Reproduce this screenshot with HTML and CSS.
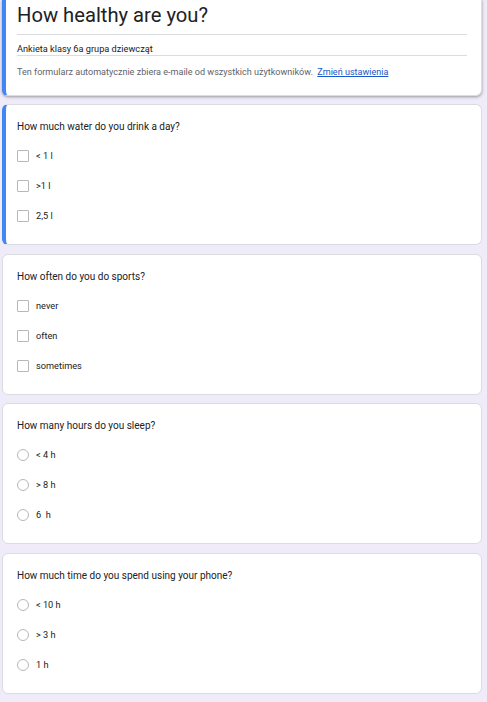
FILE: index.html
```html
<!DOCTYPE html>
<html lang="pl">
<head>
<meta charset="utf-8">
<title>How healthy are you?</title>
<link rel="stylesheet" href="styles.css">
</head>
<body>
<main class="page">
  <section class="card header active">
    <h1 class="title">How healthy are you?</h1>
    <div class="desc">Ankieta klasy 6a grupa dziewcząt</div>
    <div class="email">Ten formularz automatycznie zbiera e-maile od wszystkich użytkowników.&nbsp; <a href="#" class="link">Zmień ustawienia</a></div>
  </section>

  <section class="card active">
    <div class="question">How much water do you drink a day?</div>
    <div class="options">
      <label class="option"><span class="box"></span><span class="label">&lt; 1 l</span></label>
      <label class="option"><span class="box"></span><span class="label">&gt;1 l</span></label>
      <label class="option"><span class="box"></span><span class="label">2,5 l</span></label>
    </div>
  </section>

  <section class="card">
    <div class="question">How often do you do sports?</div>
    <div class="options">
      <label class="option"><span class="box"></span><span class="label">never</span></label>
      <label class="option"><span class="box"></span><span class="label">often</span></label>
      <label class="option"><span class="box"></span><span class="label">sometimes</span></label>
    </div>
  </section>

  <section class="card">
    <div class="question">How many hours do you sleep?</div>
    <div class="options">
      <label class="option"><span class="radio"></span><span class="label">&lt; 4 h</span></label>
      <label class="option"><span class="radio"></span><span class="label">&gt; 8 h</span></label>
      <label class="option"><span class="radio"></span><span class="label">6&nbsp; h</span></label>
    </div>
  </section>

  <section class="card">
    <div class="question">How much time do you spend using your phone?</div>
    <div class="options">
      <label class="option"><span class="radio"></span><span class="label">&lt; 10 h</span></label>
      <label class="option"><span class="radio"></span><span class="label">&gt; 3 h</span></label>
      <label class="option"><span class="radio"></span><span class="label">1 h</span></label>
    </div>
  </section>

  <section class="card">
    <div class="question">&nbsp;</div>
  </section>
</main>
</body>
</html>
```

FILE: styles.css
```css
* { box-sizing: border-box; }

html, body {
  margin: 0;
  padding: 0;
  background: #f0ebf8;
  font-family: Roboto, "Noto Sans", Arial, sans-serif;
  color: #202124;
  overflow: hidden;
}

.page {
  display: flex;
  flex-direction: column;
  padding: 0 5px 0 2px;
}

.card {
  background: #fff;
  border: 1px solid #dadce0;
  border-radius: 6px;
  padding: 15px 15px 13px 14px;
  margin-bottom: 8.5px;
  width: 480px;
}

.card.active {
  border-left: 4px solid #4285f4;
  padding-left: 11px;
}

.header {
  border-top: none;
  border-radius: 0 0 6px 6px;
  padding: 3px 14px 17px 11px;
  margin-bottom: 8px;
  box-shadow: 0 1px 2px rgba(60, 64, 67, 0.3), 0 1px 3px 1px rgba(60, 64, 67, 0.15);
}

.title {
  margin: 0;
  font-size: 20.2px;
  font-weight: 400;
  line-height: 24px;
  padding-bottom: 7px;
  border-bottom: 1px solid #dadce0;
  color: #202124;
}

.desc {
  font-size: 9.2px;
  line-height: 12px;
  padding-top: 8px;
  border-bottom: 1px solid #dadce0;
  color: #202124;
}

.email {
  font-size: 9.05px;
  line-height: 12px;
  padding-top: 10px;
  color: #5f6368;
}

.link {
  color: #1a57c8;
  text-decoration: underline;
}

.question {
  font-size: 10px;
  line-height: 14px;
  margin-bottom: 7px;
  color: #202124;
}

.options {
  display: flex;
  flex-direction: column;
}

.option {
  display: flex;
  align-items: center;
  gap: 7px;
  height: 30px;
}

.box {
  width: 12px;
  height: 12px;
  border: 1px solid #b7b7b7;
  border-radius: 1px;
  flex: none;
}

.radio {
  width: 12px;
  height: 12px;
  border: 1px solid #b7b7b7;
  border-radius: 50%;
  flex: none;
}

.label {
  font-size: 9.2px;
  line-height: 12px;
  color: #202124;
}
```
